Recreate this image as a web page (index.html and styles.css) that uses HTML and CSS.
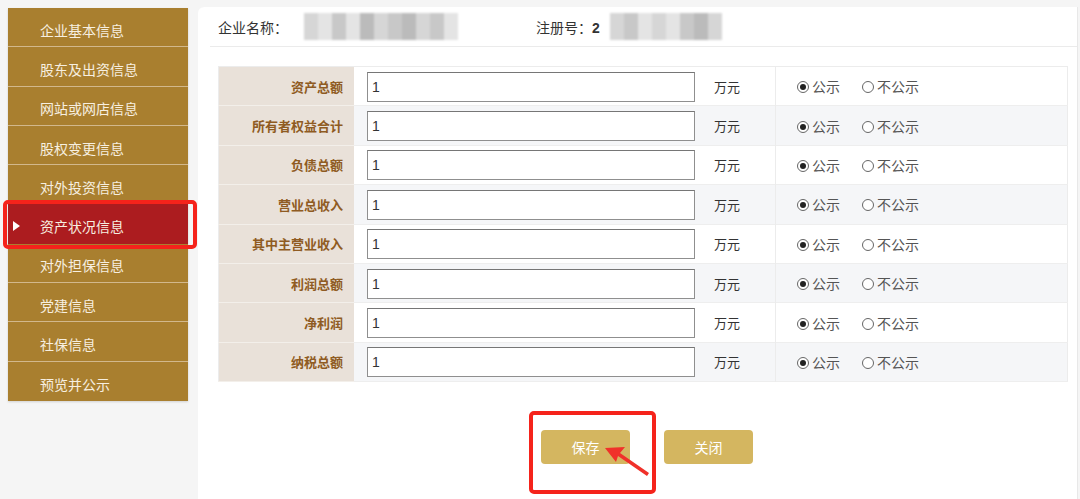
FILE: index.html
```html
<!DOCTYPE html>
<html lang="zh-CN">
<head>
<meta charset="utf-8">
<title>资产状况信息</title>
<link rel="stylesheet" href="styles.css">
</head>
<body>
<div class="page">
  <nav class="sidebar">
    <div class="nav-item">企业基本信息</div>
    <div class="nav-item">股东及出资信息</div>
    <div class="nav-item">网站或网店信息</div>
    <div class="nav-item">股权变更信息</div>
    <div class="nav-item">对外投资信息</div>
    <div class="nav-item active"><span class="tri"></span>资产状况信息</div>
    <div class="nav-item">对外担保信息</div>
    <div class="nav-item">党建信息</div>
    <div class="nav-item">社保信息</div>
    <div class="nav-item last">预览并公示</div>
  </nav>
  <main class="main">
    <header class="head">
      <span class="hlabel">企业名称：</span>
      <span class="mosaic m1">
        <i class="c2"></i><i class="c1"></i><i class="c3"></i><i class="c1"></i><i class="c4"></i><i class="c2"></i><i class="c3"></i><i class="c4"></i><i class="c2"></i><i class="c3"></i><i class="c1"></i>
      </span>
      <span class="hlabel reg">注册号：<b>2</b></span>
      <span class="mosaic m2">
        <i class="c2"></i><i class="c3"></i><i class="c1"></i><i class="c2"></i><i class="c1"></i><i class="c3"></i><i class="c4"></i><i class="c2"></i>
      </span>
    </header>
    <table class="form">
      <tbody>
        <tr><th>资产总额</th><td class="in"><input type="text" value="1"></td><td class="unit">万元</td><td class="pub"><span class="rd on"></span>公示<span class="rd off"></span>不公示</td></tr>
        <tr class="alt"><th>所有者权益合计</th><td class="in"><input type="text" value="1"></td><td class="unit">万元</td><td class="pub"><span class="rd on"></span>公示<span class="rd off"></span>不公示</td></tr>
        <tr><th>负债总额</th><td class="in"><input type="text" value="1"></td><td class="unit">万元</td><td class="pub"><span class="rd on"></span>公示<span class="rd off"></span>不公示</td></tr>
        <tr class="alt"><th>营业总收入</th><td class="in"><input type="text" value="1"></td><td class="unit">万元</td><td class="pub"><span class="rd on"></span>公示<span class="rd off"></span>不公示</td></tr>
        <tr><th>其中主营业收入</th><td class="in"><input type="text" value="1"></td><td class="unit">万元</td><td class="pub"><span class="rd on"></span>公示<span class="rd off"></span>不公示</td></tr>
        <tr class="alt"><th>利润总额</th><td class="in"><input type="text" value="1"></td><td class="unit">万元</td><td class="pub"><span class="rd on"></span>公示<span class="rd off"></span>不公示</td></tr>
        <tr><th>净利润</th><td class="in"><input type="text" value="1"></td><td class="unit">万元</td><td class="pub"><span class="rd on"></span>公示<span class="rd off"></span>不公示</td></tr>
        <tr class="alt"><th>纳税总额</th><td class="in"><input type="text" value="1"></td><td class="unit">万元</td><td class="pub"><span class="rd on"></span>公示<span class="rd off"></span>不公示</td></tr>
      </tbody>
    </table>
    <div class="actions">
      <button class="btn save">保存</button>
      <button class="btn">关闭</button>
    </div>
  </main>
</div>
<div class="mark mark-nav"></div>
<div class="mark mark-btn"></div>
<svg class="arrow" width="60" height="40" viewBox="0 0 60 40">
  <polygon points="2,5 22,4 17,10 46,30 44,33 15,13 13,19" fill="#f0312a"/>
</svg>
</body>
</html>
```
FILE: styles.css
```css
html, body {
  margin: 0;
  padding: 0;
}
body {
  background: #f5f5f5;
  font-family: "Noto Sans CJK SC", "Microsoft YaHei", sans-serif;
  font-size: 14px;
  color: #333;
  width: 1080px;
  height: 499px;
  overflow: hidden;
  position: relative;
}
.page {
  display: flex;
  align-items: flex-start;
  padding: 7px 0 0 8px;
  gap: 10px;
  height: 492px;
}
.sidebar {
  width: 180px;
  margin-top: 1px;
  display: flex;
  flex-direction: column;
  box-shadow: 0 1px 2px rgba(0,0,0,0.15);
}
.nav-item {
  height: 39.3px;
  box-sizing: border-box;
  background: #a97f2f;
  color: #f7efe0;
  font-size: 14px;
  padding-left: 32px;
  display: flex;
  align-items: center;
  padding-top: 5px;
  border-bottom: 1px solid #d2b88c;
  position: relative;
}
.nav-item.last {
  border-bottom: none;
}
.nav-item.active {
  background: #ac1c1f;
  border-bottom-color: #ac1c1f;
}
.tri {
  position: absolute;
  left: 5px;
  top: 17px;
  width: 0;
  height: 0;
  border-left: 7px solid #fff;
  border-top: 5px solid transparent;
  border-bottom: 5px solid transparent;
}
.main {
  flex: 1;
  background: #fff;
  border-radius: 6px 0 0 0;
  height: 492px;
  margin-right: 3px;
  box-shadow: 1px 0 0 #e8e8e8;
}
.head {
  height: 40px;
  margin-left: 12px;
  padding-left: 8px;
  border-bottom: 1px solid #ebebeb;
  display: flex;
  align-items: center;
  box-sizing: border-box;
}
.hlabel {
  font-size: 14px;
  color: #333;
}
.hlabel b {
  font-family: "Liberation Sans", sans-serif;
  font-weight: bold;
}
.reg {
  margin-left: 30px;
}
.mosaic {
  display: flex;
  height: 27px;
  align-items: stretch;
  filter: blur(1.2px);
}
.mosaic i {
  width: 14px;
}
.m1 {
  margin-left: 4px;
  width: 190px;
  padding: 0 12px;
  background: #fff;
}
.m2 {
  margin-left: 2px;
  width: 150px;
  padding: 0 0 0 8px;
}
.c1 { background: #e4e4e4; }
.c2 { background: #d6d6d6; }
.c3 { background: #c8c8c8; }
.c4 { background: #bbbbbb; }
.form {
  margin: 19px 0 0 20px;
  width: 850px;
  border-collapse: collapse;
  border: 1px solid #ececec;
}
.form tr {
  height: 39.4px;
  border-bottom: 1px solid #eeeeee;
}
.form tr.alt td {
  background: #f5f6f8;
}
.form th {
  width: 124px;
  background: #e9e1d9;
  color: #8f5b22;
  font-weight: bold;
  font-size: 13px;
  text-align: right;
  padding: 0 11px 0 0;
  border-bottom: 1px solid #f3efea;
}
.form td.in {
  width: 333px;
  padding: 0 0 0 13px;
}
.form input {
  display: block;
  width: 328px;
  height: 30px;
  box-sizing: border-box;
  border: 1px solid #8f8f8f;
  border-top-color: #767676;
  padding: 0 4px;
  font-family: "Liberation Sans", sans-serif;
  font-size: 14px;
  color: #333;
  background: #fff;
  margin-top: 1px;
}
.form td.unit {
  width: 60px;
  padding-left: 14px;
  font-size: 13px;
  color: #333;
  border-right: 1px solid #ececec;
}
.form td.pub {
  padding-left: 21px;
  font-size: 14px;
  color: #555;
}
.rd {
  display: inline-block;
  width: 12px;
  height: 12px;
  box-sizing: border-box;
  border: 1px solid #666;
  border-radius: 50%;
  vertical-align: -1px;
  margin-right: 3px;
  position: relative;
  background: #fff;
}
.rd.off {
  margin-left: 22px;
}
.rd.on::after {
  content: "";
  position: absolute;
  left: 2px;
  top: 2px;
  width: 6px;
  height: 6px;
  border-radius: 50%;
  background: #222;
}
.actions {
  display: flex;
  gap: 34px;
  margin: 48px 0 0 343px;
}
.btn {
  width: 89px;
  height: 34px;
  border: none;
  border-radius: 4px;
  background: #d4b660;
  color: #fff;
  font-family: "Noto Sans CJK SC", sans-serif;
  font-size: 14px;
  padding: 0;
}
.mark {
  position: absolute;
  border: 4px solid #f5231b;
  border-radius: 5px;
  box-sizing: border-box;
}
.mark-nav {
  left: 3px;
  top: 200px;
  width: 194px;
  height: 49px;
}
.mark-btn {
  left: 529px;
  top: 411px;
  width: 127px;
  height: 83px;
}
.arrow {
  position: absolute;
  left: 603px;
  top: 443px;
}
```
